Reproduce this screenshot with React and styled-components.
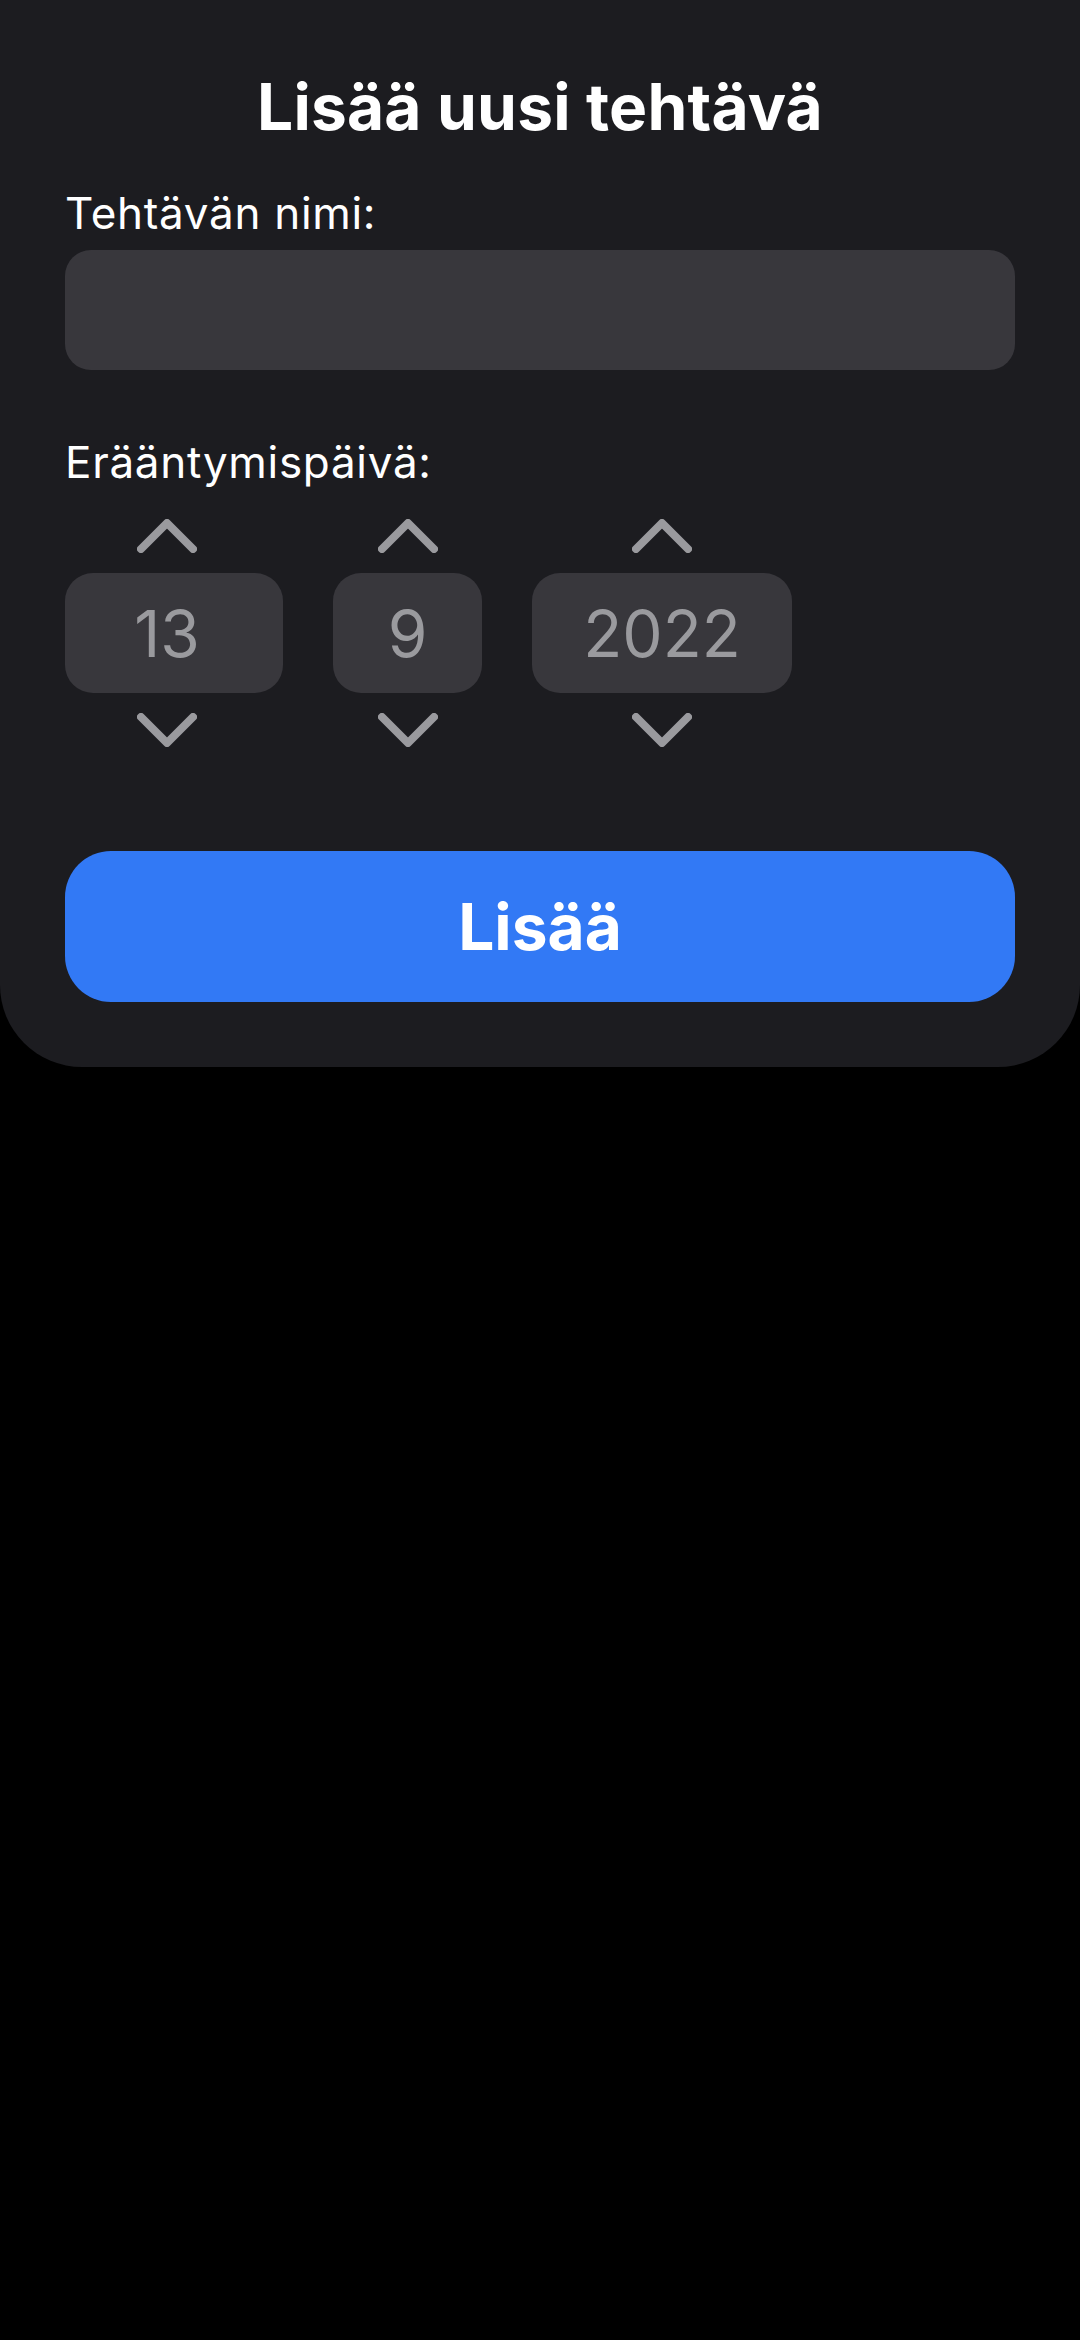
import React from 'react';
import { styled, createGlobalStyle } from 'styled-components';

const GlobalStyle = createGlobalStyle`
  html, body {
    margin: 0;
    padding: 0;
    background: #000;
  }
  body {
    font-family: Inter, "Noto Sans", sans-serif;
    color: #fff;
  }
`;

const Chevron = ({ down }) => (
  <svg width="60" height="34" viewBox="0 0 60 34" fill="none">
    <path
      d={down ? 'M4 4 L30 30 L56 4' : 'M4 30 L30 4 L56 30'}
      stroke="#9a9a9e"
      strokeWidth="8"
      strokeLinecap="round"
      strokeLinejoin="round"
    />
  </svg>
);

// shift = extra room on the right of the box (the content sits left of its centre)
const fields = [
  { value: '13', width: 218, shift: 14 },
  { value: '9', width: 149, shift: 0 },
  { value: '2022', width: 260, shift: 0 },
];

const App = () => {
  return (
    <>
      <GlobalStyle />
      <Card>
        <Title>Lisää uusi tehtävä</Title>
        <Label>Tehtävän nimi:</Label>
        <NameInput type="text" />
        <Label $spaced>Erääntymispäivä:</Label>
        <Picker>
          {fields.map((f) => (
            <Column key={f.value}>
              <Arrow $shift={f.shift}>
                <Chevron />
              </Arrow>
              <ValueBox $width={f.width} $shift={f.shift}>
                {f.value}
              </ValueBox>
              <Arrow $shift={f.shift}>
                <Chevron down />
              </Arrow>
            </Column>
          ))}
        </Picker>
        <AddButton>Lisää</AddButton>
      </Card>
    </>
  );
};

export default App;

const Card = styled.div`
  background: #1c1c20;
  padding: 68px 65px 65px;
  border-radius: 0 0 82px 82px;
  display: flex;
  flex-direction: column;
`;

const Title = styled.h1`
  margin: 0 0 42px;
  font-size: 64px;
  line-height: 77px;
  font-weight: 700;
  text-align: center;
  letter-spacing: 0.2px;
`;

const Label = styled.div`
  font-size: 44px;
  line-height: 53px;
  letter-spacing: 0.7px;
  margin-top: ${(p) => (p.$spaced ? '66px' : '0')};
  margin-bottom: 10px;
`;

const NameInput = styled.input`
  box-sizing: border-box;
  height: 120px;
  width: 100%;
  border: none;
  outline: none;
  border-radius: 26px;
  background: #38373c;
  color: #fff;
  font-family: inherit;
  font-size: 44px;
  padding: 0 28px;
`;

const Picker = styled.div`
  display: flex;
  gap: 50px;
  margin-top: 20px;
`;

const Column = styled.div`
  display: flex;
  flex-direction: column;
  align-items: center;
  gap: 20px;
`;

const Arrow = styled.div`
  display: flex;
  height: 34px;
  margin-right: ${(p) => p.$shift}px;
`;

const ValueBox = styled.div`
  box-sizing: border-box;
  width: ${(p) => p.$width}px;
  height: 120px;
  padding-right: ${(p) => p.$shift}px;
  border-radius: 28px;
  background: #38373c;
  color: #9a9a9e;
  font-size: 64px;
  display: flex;
  align-items: center;
  justify-content: center;
`;

const AddButton = styled.button`
  margin-top: 104px;
  height: 151px;
  border: none;
  border-radius: 46px;
  background: #3279f5;
  color: #fff;
  font-family: inherit;
  font-size: 64px;
  font-weight: 700;
`;
